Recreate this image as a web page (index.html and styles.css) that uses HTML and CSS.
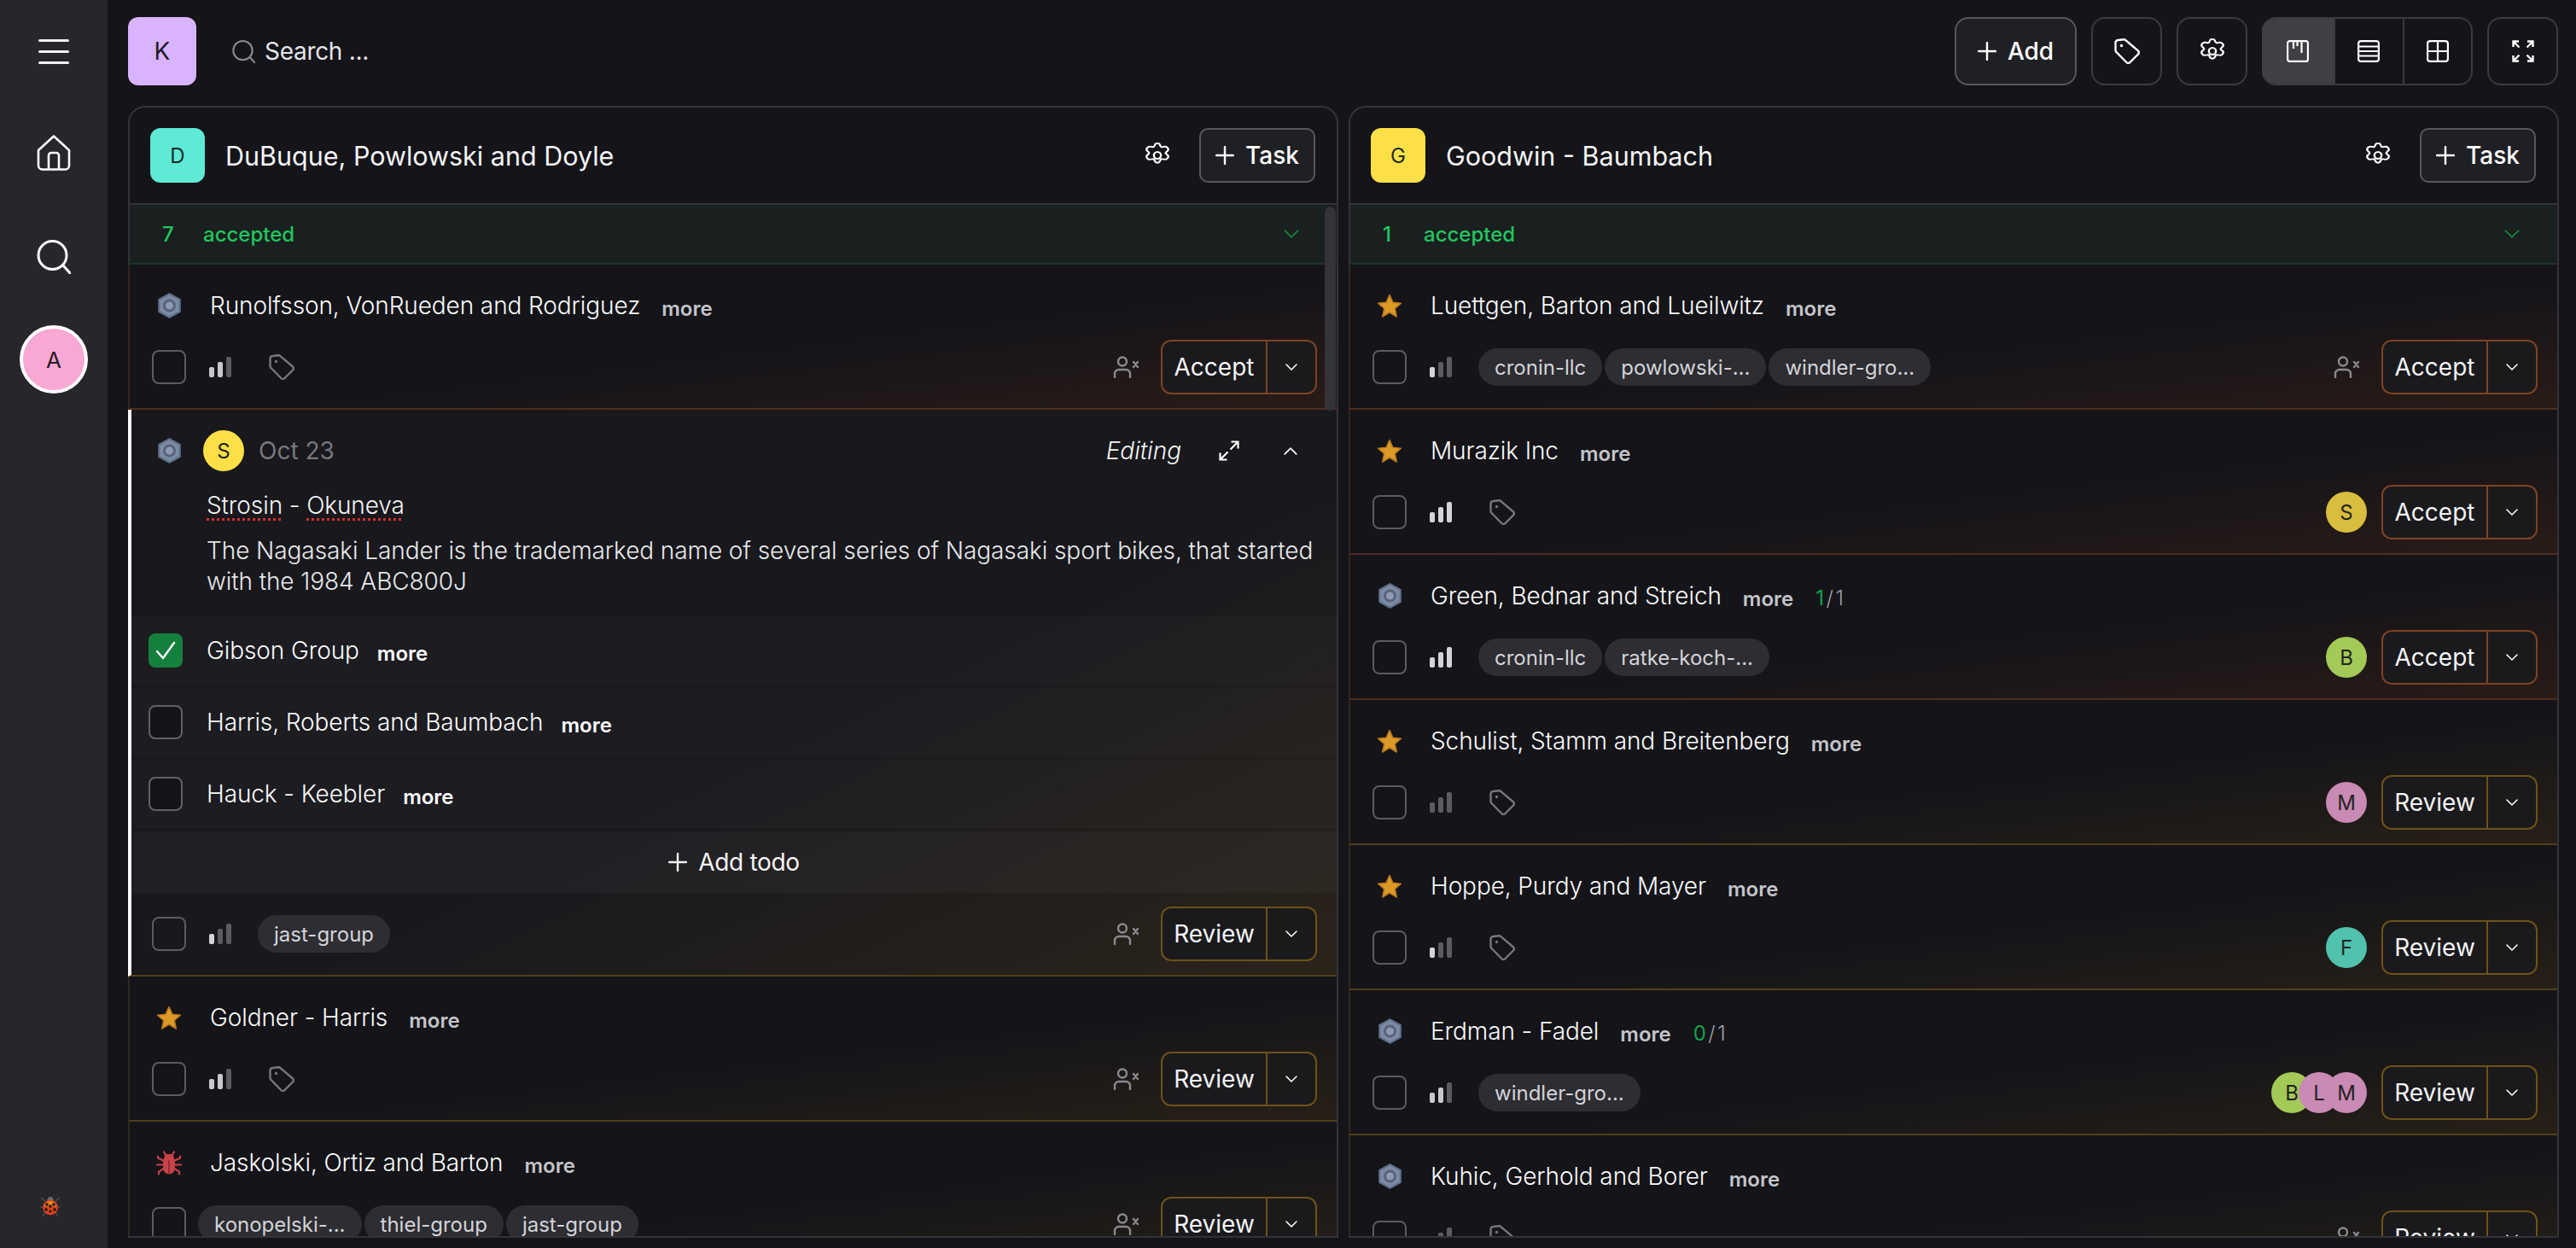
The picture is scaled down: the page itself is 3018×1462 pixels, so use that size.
FILE: index.html
```html
<!DOCTYPE html>
<html lang="en">
<head>
<meta charset="utf-8">
<title>Board</title>
<link rel="stylesheet" href="styles.css">
</head>
<body>
<svg class="sprite" width="0" height="0" aria-hidden="true">
  <symbol id="i-gear" viewBox="4.600 2.300 14.800 19.400" preserveAspectRatio="none"><path fill="none" stroke="currentColor" stroke-width="1.250" stroke-linejoin="round" d="M12 2.800c.8 0 1.300.5 1.600 1.300l.3.9c.2.5.8.8 1.300.6l1-.2c.9-.2 1.600.1 2 .8l.3.5c.4.7.3 1.400-.3 2l-.7.8c-.4.4-.4 1 0 1.400l.7.8c.6.6.7 1.400.3 2l-.3.5c-.4.7-1.100 1-2 .8l-1-.2c-.5-.2-1.100.1-1.300.6l-.3.9c-.3.8-.8 1.300-1.600 1.300s-1.300-.5-1.600-1.300l-.3-.9c-.2-.5-.8-.8-1.300-.6l-1 .2c-.9.2-1.600-.1-2-.8l-.3-.5c-.4-.7-.3-1.400.3-2l.7-.8c.4-.4.4-1 0-1.400l-.7-.8c-.6-.6-.7-1.300-.3-2l.3-.5c.4-.7 1.100-1 2-.8l1 .2c.5.2 1.100-.1 1.300-.6l.3-.9c.3-.8.8-1.300 1.600-1.300z"/><ellipse cx="12" cy="12" rx="2.200" ry="2.600" fill="none" stroke="currentColor" stroke-width="1.250"/></symbol>
  <symbol id="i-tag" viewBox="0 0 30 30"><path fill="none" stroke="currentColor" stroke-width="2.400" stroke-linejoin="round" d="M1.500 5a3 3 0 0 1 3-3l6.500-.8a3 3 0 0 1 2.400.9L28 14.500a3 3 0 0 1 0 4L18.500 28a3 3 0 0 1-4.200 0L2.500 16a3 3 0 0 1-1-2.200z"/><circle cx="8.500" cy="8.500" r="1.700" fill="currentColor"/></symbol>
  <symbol id="i-plus" viewBox="0 0 22 22"><path stroke="currentColor" stroke-width="2.400" stroke-linecap="round" d="M11 1v20M1 11h20"/></symbol>
  <symbol id="i-hex" viewBox="0 0 27 30"><path fill="#7b8ba3" stroke="#5f6f87" stroke-width="2" stroke-linejoin="round" d="M13.500 1.200 25.800 8v14L13.500 28.800 1.200 22V8z"/><circle cx="13.500" cy="15" r="6" fill="#8c9cb4" stroke="#56637a" stroke-width="3"/></symbol>
  <symbol id="i-star" viewBox="0 0 30 29"><path fill="#dd9a27" stroke="#b9791f" stroke-width="1.600" stroke-linejoin="round" d="M15 1.500l3.900 8.800 9.500.9-7.200 6.300 2.100 9.500-8.300-5-8.300 5 2.100-9.500-7.200-6.300 9.500-.9z"/></symbol>
  <symbol id="i-bug" viewBox="0 0 30 28"><path fill="#c9424a" d="M8 11a7 5 0 0 1 14 0v9a7 7 0 0 1-14 0z"/><rect x="9.500" y="3.500" width="11" height="6" rx="3" fill="#c9424a"/><path stroke="#c9424a" stroke-width="2.200" fill="none" stroke-linecap="round" d="M9 1l2 3M21 1l-2 3M8 11 2 8v-2M22 11l6-3v-2M8 16H1M22 16h7M8 21l-5 3v3M22 21l5 3v3"/><path stroke="#8f2c33" stroke-width="2" d="M15 11v15"/></symbol>
  <symbol id="i-user-x" viewBox="0 0 30 26"><g fill="none" stroke="currentColor" stroke-width="2.400" stroke-linecap="round"><circle cx="11" cy="6.500" r="5"/><path d="M2 25v-4a5 5 0 0 1 5-5h8a5 5 0 0 1 5 5v4"/><path d="M24 7l5 6M29 7l-5 6"/></g></symbol>
  <symbol id="i-chev" viewBox="0 0 14 8"><path fill="none" stroke="currentColor" stroke-width="1.500" stroke-linecap="round" stroke-linejoin="round" d="M1 1l6 6 6-6"/></symbol>
  <symbol id="i-search" viewBox="0 0 40 40"><g fill="none" stroke="currentColor" stroke-linecap="round"><circle cx="18.500" cy="18" r="16.500" stroke-width="3"/><path stroke-width="3" d="M31 30l8 9"/></g></symbol>
</svg>

<div class="app">
  <nav class="sidebar">
    <div class="side-top">
      <span class="burger"><i></i><i></i><i></i></span>
      <svg class="side-icon home" viewBox="0 0 40 42"><g fill="none" stroke="currentColor" stroke-width="2.600" stroke-linejoin="round"><path d="M2 18 20 1.500 38 18v18a4.500 4.500 0 0 1-4.500 4.500h-27A4.500 4.500 0 0 1 2 36z"/><path d="M14 40.500V24a3 3 0 0 1 3-3h6a3 3 0 0 1 3 3v16.500"/></g></svg>
      <svg class="side-icon"><use href="#i-search"/></svg>
      <span class="user-avatar">A</span>
    </div>
    <svg class="ladybug" viewBox="0 0 26 26"><g stroke="#55555a" stroke-width="1.200"><path d="M7 7 2 3M19 7l5-4M5 14H1M21 14h4M7 20l-3 5M19 20l3 5"/></g><circle cx="13" cy="5.500" r="3.500" fill="#6b6b6e"/><circle cx="13" cy="14.500" r="9" fill="#d5431a"/><path fill="#e88a1e" d="M13 7a8 8 0 0 1 7 6H6a8 8 0 0 1 7-6z"/><g fill="#231612"><circle cx="9" cy="11" r="1.800"/><circle cx="17" cy="11" r="1.800"/><circle cx="13" cy="13" r="1.800"/><circle cx="8" cy="17" r="1.800"/><circle cx="18" cy="17" r="1.800"/><circle cx="13" cy="19" r="1.500"/></g></svg>
  </nav>

  <main class="main">
    <header class="topbar">
      <span class="logo">K</span>
      <div class="search">
        <svg class="search-icon"><use href="#i-search"/></svg>
        <span class="search-text">Search ...</span>
      </div>
      <div class="tools">
        <button class="tool tool-add"><svg class="plus"><use href="#i-plus"/></svg>Add</button>
        <button class="tool"><svg class="tool-tag"><use href="#i-tag"/></svg></button>
        <button class="tool"><svg class="tool-gear"><use href="#i-gear"/></svg></button>
        <div class="views">
          <button class="view view-on"><svg class="view-icon" viewBox="0 0 26 26"><g fill="none" stroke="currentColor" stroke-width="2.200"><rect x="1.100" y="1.100" width="23.800" height="23.800" rx="2.500"/><path d="M8 1v9M12.500 1v6M17.500 1v14"/></g></svg></button>
          <button class="view"><svg class="view-icon" viewBox="0 0 26 26"><g fill="none" stroke="currentColor" stroke-width="2.200"><rect x="1.100" y="1.100" width="23.800" height="23.800" rx="3"/><path d="M1 7.500h24M1 13h24M1 18.500h24"/></g></svg></button>
          <button class="view"><svg class="view-icon" viewBox="0 0 26 26"><g fill="none" stroke="currentColor" stroke-width="2.200"><rect x="1.100" y="1.100" width="23.800" height="23.800" rx="3"/><path d="M13 1v24M1 13h24"/></g></svg></button>
        </div>
        <button class="tool"><svg class="view-icon" viewBox="0 0 26 26"><g fill="none" stroke="currentColor" stroke-width="2.400"><path d="M1.500 8V1.500H8M1.500 1.500l7 7M24.500 8V1.500H18M24.500 1.500l-7 7M1.500 18v6.500H8M1.500 24.500l7-7M24.500 18v6.500H18M24.500 24.500l-7-7"/></g></svg></button>
      </div>
    </header>

    <div class="board">
      <section class="column">
        <header class="col-head">
          <span class="col-badge badge-teal">D</span>
          <h2 class="col-title">DuBuque, Powlowski and Doyle</h2>
          <svg class="col-gear"><use href="#i-gear"/></svg>
          <button class="task-btn"><svg class="plus"><use href="#i-plus"/></svg>Task</button>
        </header>
        <div class="col-list">
          <span class="scrollbar"></span>
          <div class="group"><span class="group-count">7</span><span class="group-name">accepted</span><svg class="group-chev"><use href="#i-chev"/></svg></div>

          <article class="task accept">
            <div class="task-title"><span class="kind"><svg class="i-hex"><use href="#i-hex"/></svg></span><span class="name">Runolfsson, VonRueden and Rodriguez</span><span class="more">more</span></div>
            <div class="task-foot">
              <span class="check"></span>
              <span class="bars l2"><i></i><i></i><i></i></span>
              <svg class="foot-tag"><use href="#i-tag"/></svg>
              <svg class="user-x"><use href="#i-user-x"/></svg>
              <div class="split"><span class="split-main">Accept</span><span class="split-dd"><svg class="dd-chev"><use href="#i-chev"/></svg></span></div>
            </div>
          </article>

          <article class="task-open review">
            <div class="open-head">
              <span class="kind"><svg class="i-hex"><use href="#i-hex"/></svg></span>
              <span class="avatar av-yellow av-bright">S</span>
              <span class="date">Oct 23</span>
              <em class="editing">Editing</em>
              <svg class="expand" viewBox="0 0 24 24"><g fill="none" stroke="currentColor" stroke-width="2.200"><path d="M14.500 1.500h8v8M22.500 1.500l-9 9M9.500 22.500h-8v-8M1.500 22.500l9-9"/></g></svg>
              <svg class="chev-up"><use href="#i-chev"/></svg>
            </div>
            <div class="open-title"><span class="typo">Strosin</span> - <span class="typo">Okuneva</span></div>
            <p class="open-desc">The Nagasaki Lander is the trademarked name of several series of Nagasaki sport bikes, that started with the 1984 ABC800J</p>
            <div class="todos">
              <div class="todo"><span class="check check-done"><svg class="tick" viewBox="0 0 24 24"><path fill="none" stroke="#fff" stroke-width="2.400" stroke-linecap="round" stroke-linejoin="round" d="M2 13l7 8L22 3"/></svg></span><span class="name">Gibson Group</span><span class="more more-bright">more</span></div>
              <div class="todo"><span class="check"></span><span class="name">Harris, Roberts and Baumbach</span><span class="more more-bright">more</span></div>
              <div class="todo"><span class="check"></span><span class="name">Hauck - Keebler</span><span class="more more-bright">more</span></div>
              <div class="todo-add"><svg class="plus"><use href="#i-plus"/></svg>Add todo</div>
            </div>
            <div class="task-foot open-foot">
              <span class="check"></span>
              <span class="bars l1"><i></i><i></i><i></i></span>
              <span class="pills"><span class="pill">jast-group</span></span>
              <svg class="user-x"><use href="#i-user-x"/></svg>
              <div class="split"><span class="split-main">Review</span><span class="split-dd"><svg class="dd-chev"><use href="#i-chev"/></svg></span></div>
            </div>
          </article>

          <article class="task review">
            <div class="task-title"><span class="kind"><svg class="i-star"><use href="#i-star"/></svg></span><span class="name">Goldner - Harris</span><span class="more">more</span></div>
            <div class="task-foot">
              <span class="check"></span>
              <span class="bars l2"><i></i><i></i><i></i></span>
              <svg class="foot-tag"><use href="#i-tag"/></svg>
              <svg class="user-x"><use href="#i-user-x"/></svg>
              <div class="split"><span class="split-main">Review</span><span class="split-dd"><svg class="dd-chev"><use href="#i-chev"/></svg></span></div>
            </div>
          </article>

          <article class="task review">
            <div class="task-title"><span class="kind"><svg class="i-star"><use href="#i-bug"/></svg></span><span class="name">Jaskolski, Ortiz and Barton</span><span class="more">more</span></div>
            <div class="task-foot">
              <span class="check"></span>
              <span class="pills pills-tight"><span class="pill">konopelski-...</span><span class="pill">thiel-group</span><span class="pill">jast-group</span></span>
              <svg class="user-x"><use href="#i-user-x"/></svg>
              <div class="split"><span class="split-main">Review</span><span class="split-dd"><svg class="dd-chev"><use href="#i-chev"/></svg></span></div>
            </div>
          </article>
        </div>
      </section>

      <section class="column">
        <header class="col-head">
          <span class="col-badge badge-yellow">G</span>
          <h2 class="col-title">Goodwin - Baumbach</h2>
          <svg class="col-gear"><use href="#i-gear"/></svg>
          <button class="task-btn"><svg class="plus"><use href="#i-plus"/></svg>Task</button>
        </header>
        <div class="col-list">
          <div class="group"><span class="group-count">1</span><span class="group-name">accepted</span><svg class="group-chev"><use href="#i-chev"/></svg></div>

          <article class="task accept">
            <div class="task-title"><span class="kind"><svg class="i-star"><use href="#i-star"/></svg></span><span class="name">Luettgen, Barton and Lueilwitz</span><span class="more">more</span></div>
            <div class="task-foot">
              <span class="check"></span>
              <span class="bars l1"><i></i><i></i><i></i></span>
              <span class="pills"><span class="pill">cronin-llc</span><span class="pill">powlowski-...</span><span class="pill">windler-gro...</span></span>
              <svg class="user-x"><use href="#i-user-x"/></svg>
              <div class="split"><span class="split-main">Accept</span><span class="split-dd"><svg class="dd-chev"><use href="#i-chev"/></svg></span></div>
            </div>
          </article>

          <article class="task accept">
            <div class="task-title"><span class="kind"><svg class="i-star"><use href="#i-star"/></svg></span><span class="name">Murazik Inc</span><span class="more">more</span></div>
            <div class="task-foot">
              <span class="check"></span>
              <span class="bars l3"><i></i><i></i><i></i></span>
              <svg class="foot-tag"><use href="#i-tag"/></svg>
              <span class="avatars"><span class="avatar av-yellow">S</span></span>
              <div class="split"><span class="split-main">Accept</span><span class="split-dd"><svg class="dd-chev"><use href="#i-chev"/></svg></span></div>
            </div>
          </article>

          <article class="task accept">
            <div class="task-title"><span class="kind"><svg class="i-hex"><use href="#i-hex"/></svg></span><span class="name">Green, Bednar and Streich</span><span class="more">more</span><span class="count"><b>1</b>/1</span></div>
            <div class="task-foot">
              <span class="check"></span>
              <span class="bars l3"><i></i><i></i><i></i></span>
              <span class="pills"><span class="pill">cronin-llc</span><span class="pill">ratke-koch-...</span></span>
              <span class="avatars"><span class="avatar av-lime">B</span></span>
              <div class="split"><span class="split-main">Accept</span><span class="split-dd"><svg class="dd-chev"><use href="#i-chev"/></svg></span></div>
            </div>
          </article>

          <article class="task review">
            <div class="task-title"><span class="kind"><svg class="i-star"><use href="#i-star"/></svg></span><span class="name">Schulist, Stamm and Breitenberg</span><span class="more">more</span></div>
            <div class="task-foot">
              <span class="check"></span>
              <span class="bars l0"><i></i><i></i><i></i></span>
              <svg class="foot-tag"><use href="#i-tag"/></svg>
              <span class="avatars"><span class="avatar av-pink">M</span></span>
              <div class="split"><span class="split-main">Review</span><span class="split-dd"><svg class="dd-chev"><use href="#i-chev"/></svg></span></div>
            </div>
          </article>

          <article class="task review">
            <div class="task-title"><span class="kind"><svg class="i-star"><use href="#i-star"/></svg></span><span class="name">Hoppe, Purdy and Mayer</span><span class="more">more</span></div>
            <div class="task-foot">
              <span class="check"></span>
              <span class="bars l1"><i></i><i></i><i></i></span>
              <svg class="foot-tag"><use href="#i-tag"/></svg>
              <span class="avatars"><span class="avatar av-teal">F</span></span>
              <div class="split"><span class="split-main">Review</span><span class="split-dd"><svg class="dd-chev"><use href="#i-chev"/></svg></span></div>
            </div>
          </article>

          <article class="task review">
            <div class="task-title"><span class="kind"><svg class="i-hex"><use href="#i-hex"/></svg></span><span class="name">Erdman - Fadel</span><span class="more">more</span><span class="count"><b>0</b>/1</span></div>
            <div class="task-foot">
              <span class="check"></span>
              <span class="bars l2"><i></i><i></i><i></i></span>
              <span class="pills"><span class="pill">windler-gro...</span></span>
              <span class="avatars"><span class="avatar av-lime">B</span><span class="avatar av-pink">L</span><span class="avatar av-pink">M</span></span>
              <div class="split"><span class="split-main">Review</span><span class="split-dd"><svg class="dd-chev"><use href="#i-chev"/></svg></span></div>
            </div>
          </article>

          <article class="task review">
            <div class="task-title"><span class="kind"><svg class="i-hex"><use href="#i-hex"/></svg></span><span class="name">Kuhic, Gerhold and Borer</span><span class="more">more</span></div>
            <div class="task-foot">
              <span class="check"></span>
              <span class="bars l0"><i></i><i></i><i></i></span>
              <svg class="foot-tag"><use href="#i-tag"/></svg>
              <svg class="user-x"><use href="#i-user-x"/></svg>
              <div class="split"><span class="split-main">Review</span><span class="split-dd"><svg class="dd-chev"><use href="#i-chev"/></svg></span></div>
            </div>
          </article>
        </div>
      </section>
    </div>
  </main>
</div>
</body>
</html>
```
FILE: styles.css
```css
* { box-sizing: border-box; }
html, body { margin: 0; height: 100%; }
body {
  background: #141419;
  color: #f4f4f5;
  font-family: "Inter", "Liberation Sans", sans-serif;
  font-size: 28px;
  overflow: hidden;
}
button { font: inherit; color: inherit; cursor: pointer; }
svg { display: block; flex: none; }
.sprite { position: absolute; }

.app { display: flex; height: 100vh; }

/* sidebar */
.sidebar {
  width: 126px;
  flex: none;
  background: #26262b;
  display: flex;
  flex-direction: column;
  align-items: center;
  justify-content: space-between;
  padding: 46px 0 36px;
  color: #fff;
}
.side-top { display: flex; flex-direction: column; align-items: center; }
.burger { display: flex; flex-direction: column; gap: 10px; width: 36px; margin-bottom: 83px; }
.burger i { display: block; height: 3px; background: #f2f2f2; border-radius: 2px; }
.side-icon { width: 40px; height: 40px; }
.home { height: 42px; margin-bottom: 81px; }
.user-avatar {
  margin-top: 60px;
  width: 80px;
  height: 80px;
  border-radius: 50%;
  background: #f9a8d4;
  border: 4px solid #fff;
  color: #2a1a24;
  display: flex;
  align-items: center;
  justify-content: center;
  font-size: 26px;
  font-weight: 400;
}
.ladybug { width: 26px; height: 26px; margin-right: 8px; }

/* main */
.main {
  flex: 1;
  min-width: 0;
  display: flex;
  flex-direction: column;
  padding: 20px 20px 12px 24px;
  gap: 24px;
}
.topbar { display: flex; align-items: center; height: 80px; flex: none; }
.logo {
  width: 80px;
  height: 80px;
  border-radius: 12px;
  background: #d8b4fe;
  color: #1f1a26;
  display: flex;
  align-items: center;
  justify-content: center;
  font-size: 28px;
  font-weight: 400;
}
.search { display: flex; align-items: center; gap: 11px; margin-left: 42px; color: #e4e4e7; }
.search-icon { width: 27px; height: 27px; color: #8b8b90; }
.search-text { letter-spacing: -.3px; }
.tools { margin-left: auto; margin-right: 1px; display: flex; gap: 17px; }
.tool {
  width: 83px;
  height: 80px;
  border: 2px solid #3a3a40;
  border-radius: 16px;
  background: transparent;
  display: flex;
  align-items: center;
  justify-content: center;
  padding: 0;
  color: #fff;
}
.tool-add {
  width: 143px;
  gap: 13px;
  background: #1f2023;
  border-color: #57585c;
  font-weight: 500;
}
.plus { width: 22px; height: 22px; }
.tool-tag { width: 30px; height: 30px; }
.tool-gear { width: 28px; height: 30px; }
.tool-tag { color: #fff; }
.views {
  display: flex;
  width: 247px;
  height: 80px;
  border: 2px solid #3a3a40;
  border-left: 0;
  border-radius: 16px;
  overflow: hidden;
}
.view {
  flex: 1;
  background: transparent;
  border: 0;
  border-left: 2px solid #3a3a40;
  padding: 0;
  display: flex;
  align-items: center;
  justify-content: center;
  color: #fff;
}
.view-on { background: #3f3f44; border-left: 0; flex: 0 0 84px; }
.view-icon { width: 26px; height: 26px; }

/* board */
.board { flex: 1; min-height: 0; display: grid; grid-template-columns: 1fr 1fr; gap: 12px; }
.column { display: flex; flex-direction: column; min-width: 0; min-height: 0; }
.col-head {
  flex: none;
  height: 116px;
  display: flex;
  align-items: center;
  padding: 0 25px 0 24px;
  border: 2px solid #333338;
  border-radius: 20px 20px 0 0;
}
.col-badge {
  width: 64px;
  height: 64px;
  border-radius: 12px;
  display: flex;
  align-items: center;
  justify-content: center;
  color: #1d2a28;
  font-size: 24px;
  font-weight: 400;
}
.badge-teal { background: #5eead4; }
.badge-yellow { background: #fde047; }
.col-title { margin: 0 0 0 24px; font-size: 30.5px; font-weight: 400; flex: 1; }
.col-gear { width: 28px; height: 30px; margin-right: 35px; color: #fff; }
.task-btn {
  width: 136px;
  height: 64px;
  display: flex;
  align-items: center;
  justify-content: center;
  gap: 13px;
  background: #1f2023;
  border: 2px solid #57585c;
  border-radius: 10px;
  font-weight: 500;
  padding: 0;
  color: #fff;
}

.col-list {
  position: relative;
  flex: 1;
  min-height: 0;
  overflow: hidden;
  border-right: 2px solid #333338;
  border-bottom: 2px solid #333338;
}
.scrollbar {
  position: absolute;
  right: 1px;
  top: 2px;
  width: 13px;
  height: 239px;
  border-radius: 7px;
  background: #333338;
  z-index: 2;
}
.group {
  height: 70px;
  display: flex;
  align-items: center;
  background: #1a1f1f;
  border-left: 2px solid #333338;
  border-bottom: 2px solid #1e3527;
  padding: 0 44px 0 38px;
  color: #22c55e;
  font-size: 24px;
  font-weight: 500;
}
.group-count { width: 48px; }
.group-chev { width: 18px; height: 10px; margin-left: auto; color: #1d7a3e; }

/* tasks */
.task, .task-open {
  border-left: 2px solid;
  border-bottom: 2px solid;
}
.task { height: 170px; padding: 24px 23px 16px 26px; }
.accept {
  background-image: linear-gradient(to bottom right, rgba(234, 88, 12, 0) 55%, rgba(234, 88, 12, .1));
  border-left-color: #33261f;
  border-bottom-color: #4f2d1f;
}
.review {
  background-image: linear-gradient(to bottom right, rgba(202, 138, 4, 0) 55%, rgba(202, 138, 4, .1));
  border-left-color: #2e2a1d;
  border-bottom-color: #4f3f1a;
}
.task-title { display: flex; align-items: center; height: 48px; margin-bottom: 16px; }
.kind { width: 40px; display: flex; justify-content: center; margin-right: 28px; flex: none; }
.i-hex { width: 27px; height: 30px; }
.i-star { width: 30px; height: 29px; }
.name { white-space: nowrap; font-weight: 300; letter-spacing: -.1px; color: #fafafa; }
.more { font-size: 24px; font-weight: 600; color: #c4c4c8; margin-left: 25px; padding-top: 7px; }
.more-bright { color: #fff; margin-left: 21px; }
.count { font-size: 24px; color: #a1a1a6; margin-left: 26px; padding-top: 5px; font-weight: 300; letter-spacing: 2.500px; }
.count b { color: #16a34a; font-weight: 400; }

.task-foot { display: flex; align-items: center; height: 64px; }
.check {
  width: 40px;
  height: 40px;
  flex: none;
  border: 2px solid #5b5c61;
  border-radius: 8px;
  display: flex;
  align-items: center;
  justify-content: center;
}
.check-done { background: #15803d; border-color: #15803d; }
.tick { width: 24px; height: 24px; }
.bars { display: flex; align-items: flex-end; gap: 4px; height: 24px; margin-left: 27px; flex: none; }
.bars i { display: block; width: 6px; border-radius: 2px; background: #5c5c60; }
.bars i:nth-child(1) { height: 12px; }
.bars i:nth-child(2) { height: 18px; }
.bars i:nth-child(3) { height: 24px; }
.l1 i:nth-child(1) { background: #d4d4d8; }
.l2 i:nth-child(-n+2) { background: #c8c8cc; }
.l3 i { background: #d4d4d8; }
.foot-tag { width: 30px; height: 30px; margin-left: 44px; color: #77777b; }
.pills { display: flex; gap: 3px; margin-left: 31px; min-width: 0; }
.pills-tight { margin-left: 14px; }
.pill {
  height: 44px;
  padding: 0 19px;
  border-radius: 22px;
  background: #2d2d32;
  color: #d4d4d8;
  font-size: 24px;
  display: flex;
  align-items: center;
  white-space: nowrap;
}
.user-x { width: 30px; height: 26px; margin-left: auto; margin-right: 26px; color: #8a8a8e; }
.avatars { display: flex; margin-left: auto; margin-right: 17px; }
.avatar {
  width: 48px;
  height: 48px;
  border-radius: 50%;
  display: flex;
  align-items: center;
  justify-content: center;
  color: #23231f;
  font-size: 24px;
  flex: none;
}
.avatars .avatar + .avatar { margin-left: -16px; }
.av-yellow { background: #d9bd3e; }
.av-bright { background: #fde047; }
.av-lime { background: #a3c957; }
.av-pink { background: #c98ab4; }
.av-teal { background: #50c2ae; }

.split {
  display: flex;
  height: 64px;
  width: 183px;
  flex: none;
  border: 2px solid;
  border-radius: 12px;
  background: #1a1a1d;
  color: #f4f4f5;
  font-weight: 400;
}
.accept .split { border-color: #7d4322; }
.review .split { border-color: #6e5218; }
.split-main { flex: 1; display: flex; align-items: center; justify-content: center; }
.split-dd {
  width: 58px;
  border-left: 2px solid;
  display: flex;
  align-items: center;
  justify-content: center;
  flex: none;
}
.accept .split-dd { border-left-color: #7d4322; }
.review .split-dd { border-left-color: #6e5218; }
.dd-chev { width: 14px; height: 8px; color: #fff; }

/* expanded task */
.task-open {
  border-left: 4px solid #fff;
  background-color: #18181d;
  padding-top: 24px;
}
.open-head { display: flex; align-items: center; height: 48px; padding-left: 24px; }
.open-head .kind { margin-right: 20px; }
.date { margin-left: 17px; color: #77787d; font-weight: 400; }
.editing { margin-left: auto; font-weight: 300; color: #f4f4f5; }
.expand { width: 24px; height: 24px; margin-left: 44px; color: #fff; }
.chev-up { width: 16px; height: 9px; margin-left: 52px; margin-right: 46px; color: #fff; transform: rotate(180deg); }
.open-title { margin: 20px 0 0 88px; font-weight: 300; line-height: 40px; letter-spacing: -.1px; }
.typo {
  text-decoration: underline dotted #d32f2f 3px;
  text-underline-offset: 5px;
}
.open-desc { margin: 15px 20px 0 88px; font-weight: 300; line-height: 36px; color: #e8e8ea; letter-spacing: -.08px; }
.todos { display: flex; flex-direction: column; gap: 4px; margin-top: 23px; }
.todo {
  height: 80px;
  display: flex;
  align-items: center;
  padding-left: 20px;
  background: rgba(255, 255, 255, .018);
}
.todo .check { margin-right: 28px; }
.todo .check:not(.check-done) { border-color: #5f616b; background: #141419; }
.todo-add {
  height: 72px;
  display: flex;
  align-items: center;
  justify-content: center;
  gap: 13px;
  background: rgba(255, 255, 255, .03);
  font-weight: 400;
  letter-spacing: -.3px;
}
.open-foot { height: 96px; padding: 16px 23px 16px 24px; }
```
